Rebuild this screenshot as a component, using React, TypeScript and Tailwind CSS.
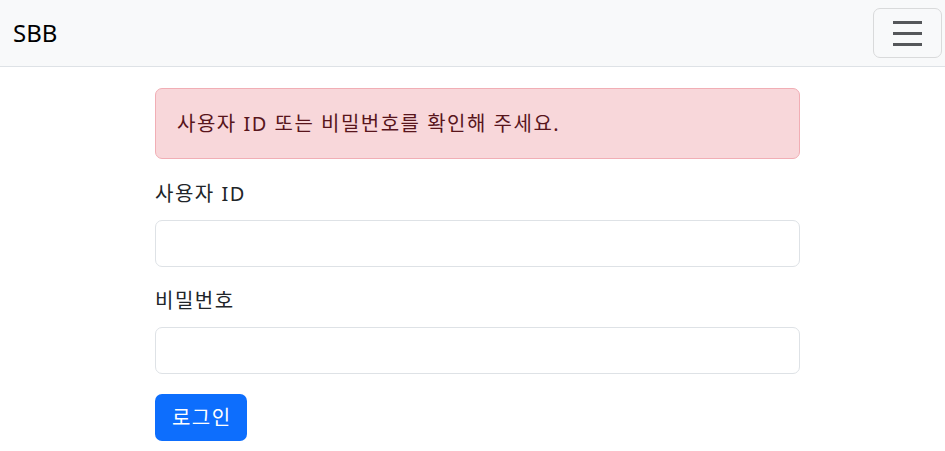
export default function App() {
  return (
    <div className="min-h-[451px] bg-white text-[#212529] font-['Noto_Sans','Noto_Sans_CJK_KR',sans-serif]">
      <nav className="flex h-[67px] items-center justify-between border-b border-[#dee2e6] bg-[#f8f9fa] pl-[13px] pr-[3px]">
        <span className="text-[24px] leading-none text-black">SBB</span>
        <button className="flex h-[50px] w-[69px] flex-col items-center justify-center gap-[8px] rounded-[7px] border border-[#d9dadb]">
          <span className="block h-[3px] w-[29px] bg-[#55575a]" />
          <span className="block h-[3px] w-[29px] bg-[#55575a]" />
          <span className="block h-[3px] w-[29px] bg-[#55575a]" />
        </button>
      </nav>
      <div className="ml-[155px] w-[645px] pt-[21px] text-[20px] tracking-[1.5px]">
        <div className="mb-[19px] rounded-[7px] border border-[#f1aeb5] bg-[#f8d7da] px-[21px] py-[19px] leading-[31px] text-[#58151c]">
          사용자 ID 또는 비밀번호를 확인해 주세요.
        </div>
        <div className="mb-[18px]">
          <label className="mb-[10px] block leading-[32px]">사용자 ID</label>
          <input className="block h-[47px] w-full rounded-[7px] border border-[#dee2e6] bg-white px-[14px] outline-none" />
        </div>
        <div className="mb-[20px]">
          <label className="mb-[10px] block leading-[32px]">비밀번호</label>
          <input type="password" className="block h-[47px] w-full rounded-[7px] border border-[#dee2e6] bg-white px-[14px] outline-none" />
        </div>
        <button className="h-[47px] w-[92px] rounded-[7px] bg-[#0d6efd] pl-[1.5px] text-white">로그인</button>
      </div>
    </div>
  )
}
